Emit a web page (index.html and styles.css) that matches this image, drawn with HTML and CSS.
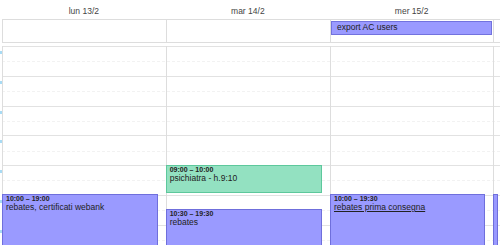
FILE: index.html
```html
<!DOCTYPE html>
<html lang="it">
<head>
    <meta charset="UTF-8">
    <title>Settimana</title>
    <link rel="stylesheet" href="styles.css">
</head>
<body>
    <div class="cal">
        <div class="head">
            <div>lun 13/2</div>
            <div>mar 14/2</div>
            <div>mer 15/2</div>
            <div></div>
        </div>

        <div class="allday">
            <div class="ad-col"></div>
            <div class="ad-col"></div>
            <div class="ad-col">
                <div class="ad-event">export AC users</div>
            </div>
            <div class="ad-col"></div>
        </div>

        <div class="week">
            <div class="axis">
                <div class="tick"></div>
                <div class="tick"></div>
                <div class="tick"></div>
                <div class="tick"></div>
                <div class="tick"></div>
                <div class="tick"></div>
                <div class="tick"></div>
            </div>
            <div class="grid">
                <div class="slots">
                    <div class="hour"><div class="half"></div></div>
                    <div class="hour"><div class="half"></div></div>
                    <div class="hour"><div class="half"></div></div>
                    <div class="hour"><div class="half"></div></div>
                    <div class="hour"><div class="half"></div></div>
                    <div class="hour"><div class="half"></div></div>
                    <div class="hour"><div class="half"></div></div>
                </div>
                <div class="days">
                    <div class="day">
                        <div class="event" style="top: 148px; height: 300px;">
                            <div class="time">10:00 – 19:00</div>
                            <div class="title">rebates, certificati webank</div>
                        </div>
                    </div>
                    <div class="day">
                        <div class="event green" style="top: 119px; height: 28px;">
                            <div class="time">09:00 – 10:00</div>
                            <div class="title">psichiatra - h.9:10</div>
                        </div>
                        <div class="event" style="top: 163px; height: 300px;">
                            <div class="time">10:30 – 19:30</div>
                            <div class="title">rebates</div>
                        </div>
                    </div>
                    <div class="day">
                        <div class="event" style="top: 148px; height: 300px;">
                            <div class="time">10:00 – 19:30</div>
                            <div class="title link">rebates prima consegna</div>
                        </div>
                    </div>
                    <div class="day">
                        <div class="event" style="top: 148px; height: 300px;">
                            <div class="time">10:00 – 19:00</div>
                            <div class="title">sviluppo</div>
                        </div>
                    </div>
                </div>
            </div>
        </div>
    </div>
</body>
</html>
```

FILE: styles.css
```css
body {
    margin: 0;
    font-family: "Liberation Sans", Arial, sans-serif;
    color: #222;
    background-color: #fff;
    overflow: hidden;
}

.cal {
    width: 500px;
    height: 245px;
    overflow: hidden;
}

.head,
.allday,
.days {
    display: grid;
    grid-template-columns: 163.7px 164.3px 163.3px 1fr;
}

.head {
    margin-left: 2px;
    height: 19px;
}

.head div {
    text-align: center;
    font-size: 8.5px;
    line-height: 18px;
    padding-top: 2px;
    color: #444;
    white-space: nowrap;
}

.allday {
    margin-left: 2px;
    height: 24px;
    box-sizing: border-box;
    border-top: 1px solid #ddd;
    border-bottom: 1px solid #ddd;
}

.ad-col {
    border-left: 1px solid #ddd;
}

.ad-event {
    box-sizing: border-box;
    height: 13.5px;
    margin: 1px 1px 0 0;
    padding-left: 5px;
    background-color: #9a9aff;
    border: 1px solid #7272de;
    font-size: 8.5px;
    line-height: 11px;
    color: #222;
    white-space: nowrap;
}

.week {
    display: flex;
    margin-top: 3px;
    height: 199px;
    overflow: hidden;
}

.axis {
    width: 2px;
    flex-shrink: 0;
}

.tick {
    height: 29.75px;
    padding-top: 5px;
    box-sizing: border-box;
}

.tick::after {
    content: "";
    display: block;
    width: 1.5px;
    height: 3px;
    background-color: #a8dbf4;
}

.grid {
    flex: 1;
    display: grid;
}

.slots,
.days {
    grid-area: 1 / 1;
}

.hour {
    height: 29.75px;
    box-sizing: border-box;
    border-top: 1px solid #e2e2e2;
}

.half {
    height: 14.4px;
    border-bottom: 1px dashed #f2f2f2;
}

.day {
    position: relative;
    border-left: 1px solid #ddd;
}

.event {
    position: absolute;
    left: -1px;
    right: 8px;
    box-sizing: border-box;
    padding-left: 3px;
    background-color: #9a9aff;
    border: 1px solid #6f6fdc;
    overflow: hidden;
    white-space: nowrap;
}

.event.green {
    background-color: #93e1c1;
    border-color: #5dc89c;
}

.time {
    font-size: 7px;
    font-weight: bold;
    line-height: 8px;
}

.title {
    font-size: 8.5px;
    line-height: 9px;
}

.title.link {
    text-decoration: underline;
}
```
